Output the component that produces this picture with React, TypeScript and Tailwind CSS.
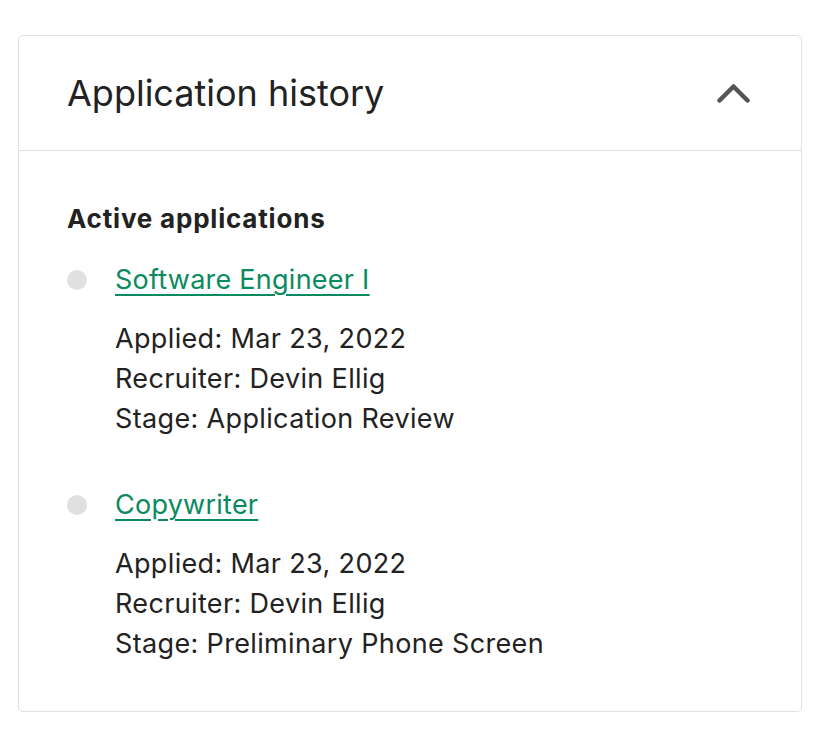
import React from "react";

interface Application {
  title: string;
  applied: string;
  recruiter: string;
  stage: string;
}

const applications: Application[] = [
  { title: "Software Engineer I", applied: "Mar 23, 2022", recruiter: "Devin Ellig", stage: "Application Review" },
  { title: "Copywriter", applied: "Mar 23, 2022", recruiter: "Devin Ellig", stage: "Preliminary Phone Screen" },
];

const ChevronUp = () => (
  <svg width="33" height="19" viewBox="0 0 33 19" fill="none">
    <path d="M2.5 16.5 L16.5 2.5 L30.5 16.5" stroke="#555555" strokeWidth="4.5" strokeLinecap="round" strokeLinejoin="round" />
  </svg>
);

export default function App() {
  return (
    <div className="min-h-[736px] bg-white pt-[35px] pl-[18px] font-['Inter','Liberation_Sans',sans-serif] text-[#222222]">
      <section className="border border-[#dde1e0] rounded-[5px] w-[784px] h-[677px]">
        <div className="flex items-center justify-between h-[115px] pl-[48px] pr-[51px] border-b border-[#dde1e0]">
          <h2 className="text-[36px] font-normal">Application history</h2>
          <button className="p-0 flex">
            <ChevronUp />
          </button>
        </div>
        <div className="pl-[48px] pt-[53px]">
          <h3 className="text-[26px] font-bold leading-[30px] tracking-[0.8px]">Active applications</h3>
          <ul className="mt-[31px] flex flex-col gap-[51px]">
            {applications.map((app) => (
              <li key={app.title} className="flex">
                <span className="w-[20px] h-[20px] rounded-full bg-[#e0e0e0] mt-[5px] shrink-0" />
                <div className="ml-[28px]">
                  <a href="#" className="text-[27px] leading-[30px] tracking-[0.25px] text-[#0a8a5f] underline underline-offset-[5px] decoration-[1.5px]">
                    {app.title}
                  </a>
                  <div className="mt-[24px] text-[27px] leading-[40px] tracking-[0.35px]">
                    <p>Applied: {app.applied}</p>
                    <p>Recruiter: {app.recruiter}</p>
                    <p>Stage: {app.stage}</p>
                  </div>
                </div>
              </li>
            ))}
          </ul>
        </div>
      </section>
    </div>
  );
}
